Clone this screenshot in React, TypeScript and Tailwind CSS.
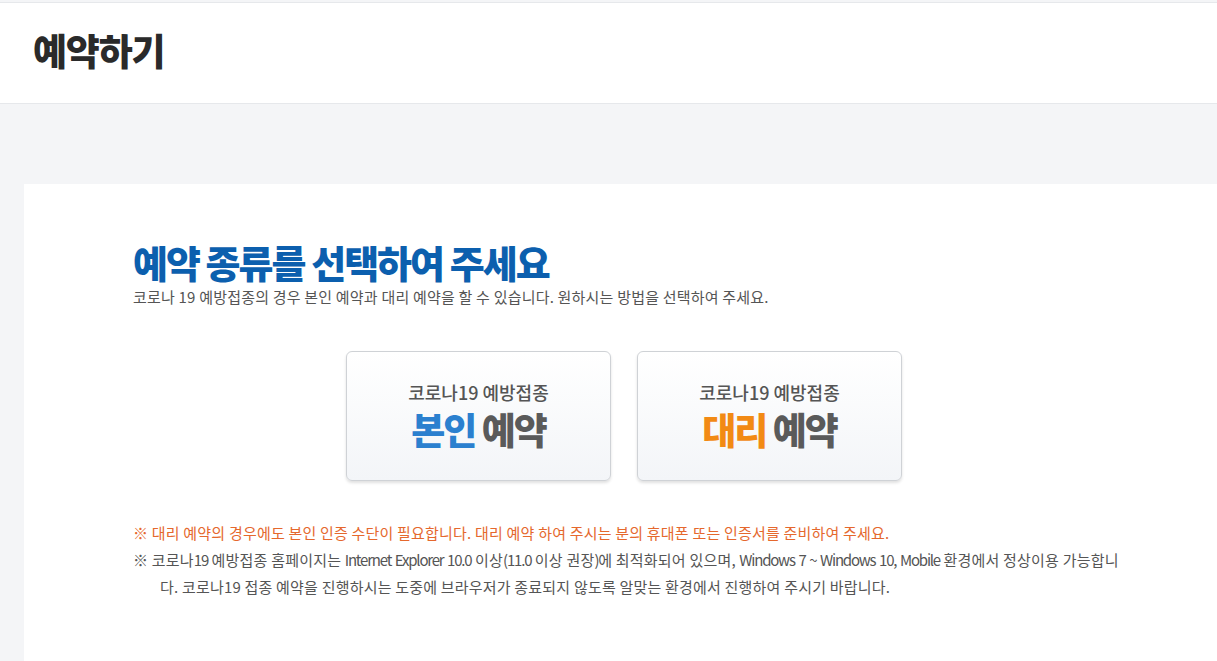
const kr = "font-['Noto_Sans_CJK_KR','Noto_Sans',sans-serif]";

const ReserveCard = ({ label, accent }: { label: string; accent: string }) => (
  <button className="flex h-[130px] w-[265px] flex-col items-center justify-center rounded-md border border-[#cfd2d6] bg-gradient-to-b from-white to-[#f3f5f8] shadow-[0_2px_3px_rgba(0,0,0,0.12)]">
    <span className="text-[18px] font-medium leading-[22px] tracking-[0px] text-[#555]">코로나19 예방접종</span>
    <span className="mt-[4px] text-[37px] font-black leading-[44px] tracking-[-2px] text-[#5a5a5a]">
      <span className={accent}>{label}</span> 예약
    </span>
  </button>
);

// latin runs are condensed a bit, like the original's font
const L = ({ children }: { children: string }) => (
  <span className="tracking-[-1.2px] [word-spacing:1.5px]">{children}</span>
);

export default function App() {
  return (
    <div className={`${kr} min-h-[661px] w-[1217px] overflow-hidden bg-[#f4f5f7]`}>
      <header className="mt-[2px] border-y border-[#e6e8eb] bg-white">
        <h1 className="flex h-[100px] items-center pl-[33px] pb-[4px] text-[37px] font-black tracking-[-1.2px] text-[#2a2a2a]">
          예약하기
        </h1>
      </header>
      <main className="ml-[24px] mt-[80px] min-h-[480px] bg-white pl-[109px] pt-[54px]">
        <h2 className="text-[38px] font-black leading-[48px] tracking-[-2px] text-[#0c5fae]">예약 종류를 선택하여 주세요</h2>
        <p className="mt-[1px] text-[15px] leading-[20px] tracking-[0.2px] text-[#555]">
          코로나 19 예방접종의 경우 본인 예약과 대리 예약을 할 수 있습니다. 원하시는 방법을 선택하여 주세요.
        </p>
        <div className="ml-[213px] mt-[44px] flex gap-[26px]">
          <ReserveCard label="본인" accent="text-[#2b80cf]" />
          <ReserveCard label="대리" accent="text-[#f28a14]" />
        </div>
        <div className="mt-[38px] text-[15px] leading-[27px] tracking-[0.2px] text-[#555]">
          <p className="whitespace-nowrap text-[#e5682d]">※ 대리 예약의 경우에도 본인 인증 수단이 필요합니다. 대리 예약 하여 주시는 분의 휴대폰 또는 인증서를 준비하여 주세요.</p>
          <div className="whitespace-nowrap">
            <p>
              ※ 코로나<L>19</L> 예방접종 홈페이지는 <L>Internet Explorer 10.0</L> 이상<L>(11.0</L> 이상 권장<L>)</L>에 최적화되어 있으며, <L>Windows 7 ~ Windows 10, Mobile</L> 환경에서 정상이용 가능합니
            </p>
            <p className="pl-[27px]">다. 코로나19 접종 예약을 진행하시는 도중에 브라우저가 종료되지 않도록 알맞는 환경에서 진행하여 주시기 바랍니다.</p>
          </div>
        </div>
      </main>
    </div>
  );
}
